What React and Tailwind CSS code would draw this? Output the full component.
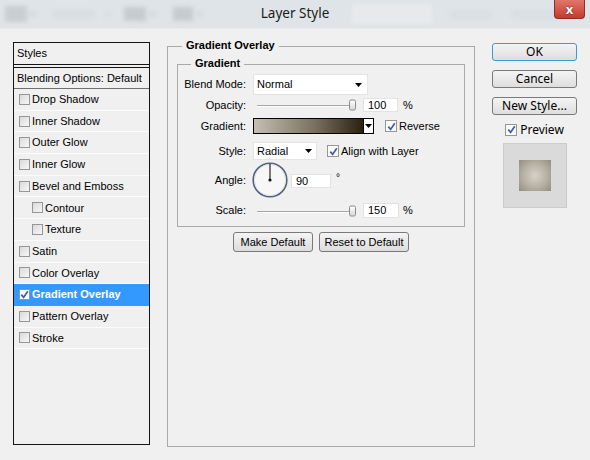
import React from 'react';

const ui = "font-['Liberation_Sans',Arial,sans-serif]";
const seg = "font-['Noto_Sans','Open_Sans',sans-serif]";

const Check = ({ on, white, big }) => (
  <span
    className={`flex ${big ? 'w-[12px] h-[12px]' : 'w-[11px] h-[11px]'} shrink-0 items-center justify-center border border-[#959696] ${
      on || white ? 'bg-[#fbfbfb]' : 'bg-gradient-to-br from-[#dadada] to-[#f7f7f7]'
    }`}
  >
    {on && (
      <svg width="9" height="9" viewBox="0 0 9 9">
        <path d="M1.3 4.6 L3.6 7.4 L7.8 1.2" fill="none" stroke="#3d5ea6" strokeWidth="1.7" />
      </svg>
    )}
  </span>
);

const Tri = () => (
  <svg width="7" height="4" viewBox="0 0 7 4">
    <path d="M0 0 H7 L3.5 4 Z" fill="#000" />
  </svg>
);

const Slider = () => (
  <div className="relative w-[105px] h-full">
    <div className="absolute left-[4px] right-[6px] top-1/2 h-[2px] border-t border-[#a6a6a6] border-b border-b-white" />
    <div className="absolute left-[96px] top-1/2 -translate-y-1/2 w-[7px] h-[11px] rounded-[2px] border border-[#8c8c8c] bg-gradient-to-b from-white to-[#d8d8d8]" />
  </div>
);

const Field = ({ w, children }) => (
  <div className={`${w} h-full flex items-center pl-[4px] bg-white border border-[#e2e2e2] text-[11px]`}>{children}</div>
);

const styleItems = [
  { label: 'Drop Shadow' },
  { label: 'Inner Shadow' },
  { label: 'Outer Glow' },
  { label: 'Inner Glow' },
  { label: 'Bevel and Emboss' },
  { label: 'Contour', sub: true },
  { label: 'Texture', sub: true },
  { label: 'Satin' },
  { label: 'Color Overlay' },
  { label: 'Gradient Overlay', active: true },
  { label: 'Pattern Overlay' },
  { label: 'Stroke' },
];

const Btn = ({ children, primary }) => (
  <button
    className={`w-[85px] h-[18px] rounded-[3px] border ${
      primary ? 'border-[#3c9ad8]' : 'border-[#7a7a7a]'
    } bg-gradient-to-b from-[#f4f4f4] to-[#dedede] ${seg} text-[12px] leading-none text-black`}
  >
    {children}
  </button>
);

const Row = ({ label, mt, h, children }) => (
  <div className={`flex items-center ${mt} ${h}`}>
    <span className="w-[69px] text-right pr-[1px]">{label}</span>
    <div className="ml-[6px] flex items-center h-full">{children}</div>
  </div>
);

export default function App() {
  return (
    <div className={`w-[590px] h-[460px] bg-[#f0f0f0] overflow-hidden text-[11px] text-black ${ui}`}>
      {/* title bar */}
      <div className="relative h-[29px] bg-[#dfe4e8] border-b border-[#e8ebee]">
        <div className="flex items-center h-full blur-[2px]">
          <div className="ml-[5px] w-[22px] h-[16px] bg-[#c9ced3] rounded-[2px]" />
          <div className="ml-[3px] w-[5px] h-[4px] bg-[#cdd2d6]" />
          <div className="ml-[18px] w-[42px] h-[8px] bg-[#d8dde1]" />
          <div className="ml-[10px] w-[5px] h-[4px] bg-[#d4d9dd]" />
          <div className="ml-[14px] w-[22px] h-[14px] bg-[#c6cbd0]" />
          <div className="ml-[4px] w-[5px] h-[4px] bg-[#cdd2d6]" />
          <div className="ml-[18px] w-[20px] h-[14px] bg-[#c6cbd0]" />
          <div className="ml-[4px] w-[5px] h-[4px] bg-[#cdd2d6]" />
          <div className="ml-[150px] w-[80px] h-[20px] bg-[#e7eaed]" />
          <div className="ml-[18px] w-[40px] h-[7px] bg-[#d8dde1]" />
          <div className="ml-[22px] w-[48px] h-[7px] bg-[#d8dde1]" />
        </div>
        <div className={`absolute inset-0 flex items-center justify-center pb-[1px] ${seg} text-[13.5px] text-[#1b1b1b]`}>
          Layer Style
        </div>
        <div className="absolute right-[5px] top-0 w-[31px] h-[19px] rounded-b-[4px] border border-t-0 border-[#8f2e25] bg-gradient-to-b from-[#e0766a] to-[#c13b2e] flex items-center justify-center">
          <span className={`${seg} text-[13px] font-bold text-white leading-none [text-shadow:0_0_2px_#5a1510]`}>x</span>
        </div>
      </div>

      <div className="flex pl-[13px] pt-[13px]">
        {/* styles list */}
        <div className="w-[137px] h-[403px] border border-[#151515] flex flex-col">
          <div className="h-[22px] border-b border-[#151515] flex items-center pl-[3px]">Styles</div>
          <div className="mt-[2px] h-[22px] border-t border-b border-t-[#151515] border-b-[#707070] flex items-center pl-[3px]">
            Blending Options: Default
          </div>
          {styleItems.map((it) => (
            <div
              key={it.label}
              className={`h-[21.7px] flex items-center border-b ${
                it.active ? 'bg-[#3399ff] text-white font-bold border-[#3399ff]' : 'border-[#fcfcfc]'
              } ${it.sub ? 'pl-[18px]' : 'pl-[5px]'}`}
            >
              <Check on={it.active} />
              <span className="ml-[2px]">{it.label}</span>
            </div>
          ))}
        </div>

        {/* gradient overlay */}
        <div className="ml-[17px] mt-[4px] w-[308px] h-[401px] relative border border-[#a9a9a9] pt-[17px] px-[9px]">
          <span className="absolute left-[14px] -top-[8px] px-[4px] bg-[#f0f0f0] font-bold leading-[13px]">Gradient Overlay</span>
          <div className="relative w-[288px] h-[163px] border border-[#a9a9a9]">
            <span className="absolute left-[13px] -top-[8px] px-[4px] bg-[#f0f0f0] font-bold leading-[13px]">Gradient</span>
            <Row label="Blend Mode:" mt="mt-[9px]" h="h-[21px]">
              <div className="w-[115px] h-full bg-white border border-[#e4e4e4] flex items-center justify-between pl-[3px] pr-[5px]">
                <span>Normal</span>
                <Tri />
              </div>
            </Row>
            <Row label="Opacity:" mt="mt-[3px]" h="h-[14px]">
              <Slider />
              <div className="ml-[5px] h-full">
                <Field w="w-[35px]">100</Field>
              </div>
              <span className="ml-[5px]">%</span>
            </Row>
            <Row label="Gradient:" mt="mt-[6px]" h="h-[16px]">
              <div className="w-[121px] h-full flex border border-black">
                <div className="flex-1 bg-[linear-gradient(to_right,#c3bfb2,#7a725f_55%,#2a2210)]" />
                <div className="w-[10px] bg-white border-l border-black flex items-center justify-center">
                  <Tri />
                </div>
              </div>
              <div className="ml-[11px] flex items-center">
                <Check on big />
                <span className="ml-[2px]">Reverse</span>
              </div>
            </Row>
            <Row label="Style:" mt="mt-[8px]" h="h-[18px]">
              <div className="w-[64px] h-full bg-white border border-[#e4e4e4] flex items-center justify-between pl-[3px] pr-[4px]">
                <span>Radial</span>
                <Tri />
              </div>
              <div className="ml-[10px] flex items-center">
                <Check on big />
                <span className="ml-[2px]">Align with Layer</span>
              </div>
            </Row>
            <Row label="Angle:" mt="mt-[2px]" h="h-[36px]">
              <svg width="36" height="36" viewBox="0 0 36 36" className="-ml-[1px]">
                <circle cx="18" cy="18" r="16.8" fill="#f7f7f7" stroke="#56617c" strokeWidth="1.6" />
                <circle cx="18" cy="18" r="15.6" fill="none" stroke="#d9dce2" strokeWidth="0.8" />
                <line x1="18" y1="18" x2="18" y2="2" stroke="#111" strokeWidth="1.1" />
                <circle cx="18" cy="18" r="1.6" fill="#111" />
              </svg>
              <div className="ml-[3px] h-[14px] mt-[2px]">
                <Field w="w-[40px]">90</Field>
              </div>
              <span className="ml-[5px] -mt-[6px] text-[10px]">°</span>
            </Row>
            <Row label="Scale:" mt="mt-[5px]" h="h-[15px]">
              <Slider />
              <div className="ml-[5px] h-full">
                <Field w="w-[36px]">150</Field>
              </div>
              <span className="ml-[4px]">%</span>
            </Row>
          </div>
          <div className="mt-[5px] flex justify-center gap-[6px]">
            <button className="w-[80px] h-[20px] rounded-[3px] border border-[#7a7a7a] bg-gradient-to-b from-[#f4f4f4] to-[#dcdcdc] text-[11px]">
              Make Default
            </button>
            <button className="w-[90px] h-[20px] rounded-[3px] border border-[#7a7a7a] bg-gradient-to-b from-[#f4f4f4] to-[#dcdcdc] text-[11px]">
              Reset to Default
            </button>
          </div>
        </div>

        {/* buttons */}
        <div className="ml-[17px] mt-[1px] w-[85px] flex flex-col items-center">
          <Btn primary>OK</Btn>
          <div className="mt-[9px]">
            <Btn>Cancel</Btn>
          </div>
          <div className="mt-[9px]">
            <Btn>New Style...</Btn>
          </div>
          <div className={`mt-[8px] h-[13px] flex items-center gap-[3px] ${seg} text-[12px]`}>
            <Check on white big />
            <span>Preview</span>
          </div>
          <div className="mt-[7px] w-[64px] h-[65px] bg-[#dadada] border border-[#cbcbcb] flex items-center justify-center">
            <div className="w-[32px] h-[31px] bg-[radial-gradient(circle,#d6d2c6_0%,#b5b0a2_55%,#938d7f_100%)]" />
          </div>
        </div>
      </div>
    </div>
  );
}
